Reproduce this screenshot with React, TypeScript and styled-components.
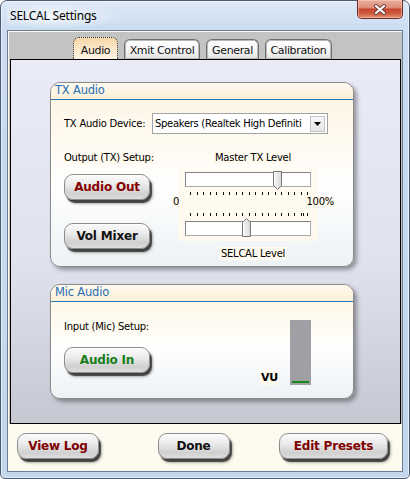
import React from 'react'
import styled, { createGlobalStyle } from 'styled-components'

const GlobalStyle = createGlobalStyle`
  html, body {
    margin: 0;
    padding: 0;
    background: #ffffff;
  }
  * {
    box-sizing: border-box;
  }
`

// window chrome
const Window = styled.div`
  width: 410px;
  height: 479px;
  display: flex;
  flex-direction: column;
  padding: 0 6px 6px 6px;
  border: 1px solid #4b5b71;
  border-radius: 7px 7px 5px 5px;
  background: linear-gradient(180deg, #dde9f6 0px, #cbdcf0 30px, #c3d6ec 100%);
  box-shadow: inset 0 0 0 1px rgba(255, 255, 255, 0.55);
  font-family: 'DejaVu Sans', sans-serif;
`

const TitleBar = styled.div`
  height: 29px;
  display: flex;
  justify-content: space-between;
  align-items: flex-start;
  padding-left: 3px;
  background: radial-gradient(ellipse 70px 13px at 45px 15px, rgba(255, 255, 255, 0.75), rgba(255, 255, 255, 0));
`

const Title = styled.span`
  font-family: 'Noto Sans', sans-serif;
  font-size: 12px;
  letter-spacing: -0.2px;
  line-height: 29px;
  color: #000;
`

const CloseButton = styled.div`
  width: 46px;
  height: 19px;
  margin-top: -1px;
  display: flex;
  align-items: center;
  justify-content: center;
  border: 1px solid #6b2e2a;
  border-top: none;
  border-radius: 0 0 5px 5px;
  background: linear-gradient(180deg, #eab2a2 0%, #dd8b74 42%, #c6462f 52%, #cf5a41 75%, #e59274 100%);
  box-shadow: inset 0 0 0 1px rgba(255, 210, 190, 0.5);
`

const Client = styled.div`
  flex: 1;
  display: flex;
  flex-direction: column;
  padding: 1px 0 0 1px;
  border: 1px solid #6c7d94;
  background: #fdfaf0;
`

// tab area
const TabArea = styled.div`
  height: 392px;
  display: flex;
  flex-direction: column;
  padding: 5px 1px 0 1px;
  background: #c3c3c3;
`

const TabRow = styled.div`
  height: 22px;
  display: flex;
  align-items: flex-end;
  gap: 6px;
  padding-left: 63px;
`

const Tab = styled.div<{ $w: number; $active?: boolean }>`
  width: ${p => p.$w}px;
  height: ${p => (p.$active ? 22 : 20)}px;
  padding-top: ${p => (p.$active ? 6 : 4)}px;
  border: 1px ${p => (p.$active ? 'dotted #2a2a2a' : 'solid #6f6f6f')};
  border-bottom: none;
  border-radius: 6px 6px 0 0;
  background: ${p =>
    p.$active
      ? 'linear-gradient(180deg, #f7d6a6 0%, #fbe6c8 45%, #fdf3e4 100%)'
      : 'linear-gradient(180deg, #ffffff 0%, #f6f6f6 50%, #e2e2e2 100%)'};
  box-shadow: ${p => (p.$active ? 'none' : 'inset 0 0 0 1px #b9b9b9')};
  font-size: 11px;
  letter-spacing: -0.35px;
  line-height: 14px;
  text-align: center;
  color: #111;
`

const Panel = styled.div`
  flex: 1;
  display: flex;
  flex-direction: column;
  padding: 22px 0 0 39px;
  border: 1px solid #000;
  background: linear-gradient(180deg, #e9ebf7 0%, #e0e2ee 55%, #c5c8d2 100%);
`

// group boxes
const Group = styled.div<{ $h: number; $gap?: number }>`
  width: 304px;
  height: ${p => p.$h}px;
  margin-top: ${p => p.$gap ?? 0}px;
  display: flex;
  flex-direction: column;
  border: 1px solid #8b8b8b;
  border-radius: 10px;
  overflow: hidden;
  background: linear-gradient(180deg, #fdf4e1 0%, #fffcf6 42%, #ffffff 55%, #edf2f5 100%);
  box-shadow: 3px 3px 4px rgba(0, 0, 0, 0.35);
`

const GroupHeader = styled.div`
  height: 17px;
  padding-left: 4px;
  border-bottom: 1px solid #2b79b9;
  background: linear-gradient(180deg, #fffaf0 0%, #fbefd6 100%);
  color: #1f6fb3;
  font-size: 11.5px;
  letter-spacing: -0.2px;
  line-height: 15px;
`

const TxBody = styled.div`
  flex: 1;
  padding: 13px 0 0 12px;
`

const DeviceRow = styled.div`
  height: 21px;
  display: grid;
  grid-template-columns: 89px 176px;
  align-items: center;
`

const Label = styled.span<{ $bold?: boolean }>`
  justify-self: start;
  padding: 0 1px;
  background: #fffaef;
  color: #000;
  font-size: ${p => (p.$bold ? 11 : 10)}px;
  font-weight: ${p => (p.$bold ? 'bold' : 'normal')};
  letter-spacing: -0.25px;
  line-height: ${p => (p.$bold ? 15 : 13)}px;
`

const Combo = styled.div`
  height: 21px;
  display: flex;
  align-items: center;
  padding: 0 2px 0 2px;
  border: 1px solid #a2a2a2;
  background: #fff;
`

const ComboText = styled.span`
  flex: 1;
  white-space: nowrap;
  font-size: 10px;
  letter-spacing: -0.3px;
  color: #000;
`

const ComboDrop = styled.div`
  width: 15px;
  height: 16px;
  display: flex;
  align-items: center;
  justify-content: center;
  border: 1px solid #c3c3c3;
  background: linear-gradient(180deg, #f8f8f8, #e4e4e4);
`

const SetupArea = styled.div`
  display: flex;
  margin-top: 17px;
`

const LeftCol = styled.div`
  width: 109px;
  display: flex;
  flex-direction: column;
  align-items: flex-start;
`

const RightCol = styled.div`
  width: 162px;
  display: flex;
  flex-direction: column;
  align-items: center;
`

const PillButton = styled.button<{ $w: number; $color: string; $top?: number; $left?: number }>`
  width: ${p => p.$w}px;
  height: 26px;
  margin-top: ${p => p.$top ?? 0}px;
  margin-left: ${p => p.$left ?? 0}px;
  padding: 0;
  border: 1px solid #8c8c8c;
  border-radius: 9px;
  background: linear-gradient(180deg, #fbfbfb 0%, #ebebeb 40%, #d0d0d0 78%, #dedede 100%);
  box-shadow: inset 0 1px 0 #ffffff, 2px 3px 1px rgba(45, 45, 45, 0.85), 3px 4px 3px rgba(0, 0, 0, 0.25);
  color: ${p => p.$color};
  font-family: 'DejaVu Sans', sans-serif;
  font-weight: bold;
  font-size: 12px;
  letter-spacing: -0.2px;
  line-height: 24px;
  text-align: center;
  cursor: pointer;
`

// sliders
const SliderBox = styled.div<{ $h: number; $pt: number; $mt?: number }>`
  align-self: flex-start;
  width: 140px;
  height: ${p => p.$h}px;
  margin: ${p => p.$mt ?? 0}px 0 0 6px;
  padding: ${p => p.$pt}px 0 0 7px;
  background: #fffaef;
  display: flex;
  flex-direction: column;
  gap: 5px;
`

const Track = styled.div`
  position: relative;
  width: 126px;
  height: 15px;
  border: 1px solid #a9a9a9;
  border-top-color: #858585;
  border-left-color: #858585;
  background: #fff;
`

const ThumbSvg = styled.svg`
  position: absolute;
  display: block;
`

const TickSvg = styled.svg`
  display: block;
`

const ScaleRow = styled.div`
  width: 162px;
  height: 11px;
  display: flex;
  justify-content: space-between;
  padding: 0 0 0 1px;
  background: #fffaef;
  font-size: 10px;
  letter-spacing: -0.25px;
  line-height: 11px;
  color: #000;
`

const LevelLabel = styled(Label)`
  margin-top: 6px;
`

// mic group
const MicBody = styled.div`
  flex: 1;
  display: flex;
  justify-content: space-between;
  align-items: flex-end;
  padding: 18px 42px 13px 12px;
`

const MicLeft = styled.div`
  align-self: flex-start;
  display: flex;
  flex-direction: column;
  align-items: flex-start;
`

const VuWrap = styled.div`
  display: flex;
  align-items: flex-end;
  gap: 11px;
`

const Meter = styled.div`
  width: 21px;
  height: 65px;
  display: flex;
  align-items: flex-end;
  padding: 0 2px 2px 2px;
  background: #a0a0a4;
`

const MeterLevel = styled.div`
  width: 100%;
  height: 2px;
  background: #17891a;
`

// footer
const Footer = styled.div`
  flex: 1;
  display: flex;
  justify-content: space-between;
  align-items: flex-start;
  padding: 9px 14px 0 8px;
`

const Ticks = ({ extra }: { extra?: number }) => {
  const xs = Array.from({ length: 19 }, (_, i) => 5 + Math.round(i * 6.5))
  if (extra !== undefined) xs.push(extra)
  return (
    <TickSvg width="126" height="3" viewBox="0 0 126 3">
      {xs.map((x, i) => (
        <line key={i} x1={x + 0.5} y1="0" x2={x + 0.5} y2="3" stroke="#111" strokeWidth="1" />
      ))}
    </TickSvg>
  )
}

const Slider = ({ value, up }: { value: number; up?: boolean }) => {
  const left = Math.round((value / 100) * 115)
  const path = up
    ? 'M4.5 0.5 L8.5 4.5 V18.5 H0.5 V4.5 Z'
    : 'M0.5 0.5 H8.5 V14.5 L4.5 18.5 L0.5 14.5 Z'
  const gid = up ? 'thumbUp' : 'thumbDown'
  return (
    <Track>
      <ThumbSvg width="9" height="19" viewBox="0 0 9 19" style={{ left, top: up ? -4 : -2 }}>
        <defs>
          <linearGradient id={gid} x1="0" y1="0" x2="1" y2="0">
            <stop offset="0" stopColor="#fafafa" />
            <stop offset="1" stopColor="#d7d7d7" />
          </linearGradient>
        </defs>
        <path d={path} fill={`url(#${gid})`} stroke="#747474" strokeWidth="1" />
        <path d={up ? 'M1.5 5 V17.5' : 'M1.5 1.5 V14'} stroke="#ffffff" strokeWidth="1" />
      </ThumbSvg>
    </Track>
  )
}

const App = () => {
  return (
    <>
      <GlobalStyle />
      <Window>
        <TitleBar>
          <Title>SELCAL Settings</Title>
          <CloseButton>
            <svg width="14" height="11" viewBox="0 0 14 11">
              <path d="M3 2 L11 9 M11 2 L3 9" stroke="#6a3a34" strokeWidth="4" strokeLinecap="round" />
              <path d="M3 2 L11 9 M11 2 L3 9" stroke="#ffffff" strokeWidth="2.2" strokeLinecap="round" />
            </svg>
          </CloseButton>
        </TitleBar>

        <Client>
          <TabArea>
            <TabRow>
              <Tab $w={45} $active>Audio</Tab>
              <Tab $w={76}>Xmit Control</Tab>
              <Tab $w={53}>General</Tab>
              <Tab $w={67}>Calibration</Tab>
            </TabRow>

            <Panel>
              <Group $h={185}>
                <GroupHeader>TX Audio</GroupHeader>
                <TxBody>
                  <DeviceRow>
                    <Label>TX Audio Device:</Label>
                    <Combo>
                      <ComboText>Speakers (Realtek High Definiti</ComboText>
                      <ComboDrop>
                        <svg width="7" height="4" viewBox="0 0 7 4">
                          <path d="M0 0 H7 L3.5 4 Z" fill="#000" />
                        </svg>
                      </ComboDrop>
                    </Combo>
                  </DeviceRow>

                  <SetupArea>
                    <LeftCol>
                      <Label>Output (TX) Setup:</Label>
                      <PillButton $w={86} $color="#860000" $top={10} $left={1}>Audio Out</PillButton>
                      <PillButton $w={86} $color="#111111" $top={23} $left={1}>Vol Mixer</PillButton>
                    </LeftCol>

                    <RightCol>
                      <Label>Master TX Level</Label>
                      <SliderBox $h={27} $pt={3} $mt={5}>
                        <Slider value={76} />
                        <Ticks />
                      </SliderBox>
                      <ScaleRow>
                        <span>0</span>
                        <span>100%</span>
                      </ScaleRow>
                      <SliderBox $h={34} $pt={6}>
                        <Ticks extra={118} />
                        <Slider value={49} up />
                      </SliderBox>
                      <LevelLabel>SELCAL Level</LevelLabel>
                    </RightCol>
                  </SetupArea>
                </TxBody>
              </Group>

              <Group $h={115} $gap={17}>
                <GroupHeader>Mic Audio</GroupHeader>
                <MicBody>
                  <MicLeft>
                    <Label>Input (Mic) Setup:</Label>
                    <PillButton $w={86} $color="#1a7d1a" $top={14} $left={1}>Audio In</PillButton>
                  </MicLeft>
                  <VuWrap>
                    <Label $bold>VU</Label>
                    <Meter>
                      <MeterLevel />
                    </Meter>
                  </VuWrap>
                </MicBody>
              </Group>
            </Panel>
          </TabArea>

          <Footer>
            <PillButton $w={82} $color="#800000">View Log</PillButton>
            <PillButton $w={72} $color="#111111" $left={9}>Done</PillButton>
            <PillButton $w={109} $color="#800000">Edit Presets</PillButton>
          </Footer>
        </Client>
      </Window>
    </>
  )
}

export default App
